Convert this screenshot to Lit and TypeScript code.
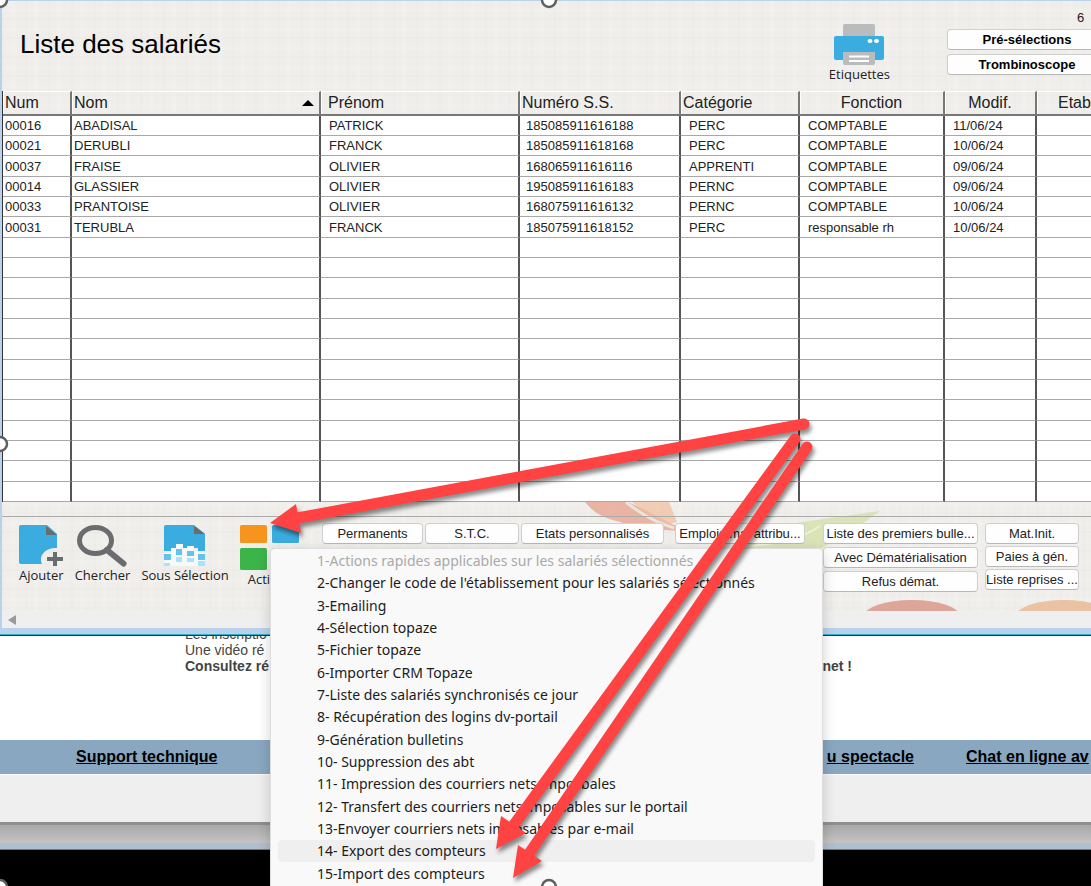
import { LitElement, html, css, svg } from "lit";
import { customElement } from "lit/decorators.js";
import { classMap } from "lit/directives/class-map.js";

interface Employee {
  num: string;
  nom: string;
  prenom: string;
  nss: string;
  categorie: string;
  fonction: string;
  modif: string;
}

const EMPLOYEES: Employee[] = [
  { num: "00016", nom: "ABADISAL", prenom: "PATRICK", nss: "185085911616188", categorie: "PERC", fonction: "COMPTABLE", modif: "11/06/24" },
  { num: "00021", nom: "DERUBLI", prenom: "FRANCK", nss: "185085911618168", categorie: "PERC", fonction: "COMPTABLE", modif: "10/06/24" },
  { num: "00037", nom: "FRAISE", prenom: "OLIVIER", nss: "168065911616116", categorie: "APPRENTI", fonction: "COMPTABLE", modif: "09/06/24" },
  { num: "00014", nom: "GLASSIER", prenom: "OLIVIER", nss: "195085911616183", categorie: "PERNC", fonction: "COMPTABLE", modif: "09/06/24" },
  { num: "00033", nom: "PRANTOISE", prenom: "OLIVIER", nss: "168075911616132", categorie: "PERNC", fonction: "COMPTABLE", modif: "10/06/24" },
  { num: "00031", nom: "TERUBLA", prenom: "FRANCK", nss: "185075911618152", categorie: "PERC", fonction: "responsable rh", modif: "10/06/24" },
];

const VISIBLE_ROWS = 19;

const MENU = [
  "1-Actions rapides applicables sur les salariés sélectionnés",
  "2-Changer le code de l'établissement pour les salariés sélectionnés",
  "3-Emailing",
  "4-Sélection topaze",
  "5-Fichier topaze",
  "6-Importer CRM Topaze",
  "7-Liste des salariés synchronisés ce jour",
  "8- Récupération des logins dv-portail",
  "9-Génération bulletins",
  "10- Suppression des abt",
  "11- Impression des courriers nets imposbales",
  "12- Transfert des courriers nets imposables sur le portail",
  "13-Envoyer courriers nets imposables par e-mail",
  "14- Export des compteurs",
  "15-Import des compteurs",
];

const printerIcon = html`<svg width="50" height="42" viewBox="0 0 50 42" aria-hidden="true">
  <rect x="9" y="0" width="32" height="16" rx="2" fill="#b9bbbd" />
  <rect x="0" y="12" width="50" height="24" rx="2" fill="#3aacdf" />
  <ellipse cx="36" cy="17" rx="2.5" ry="2" fill="#fff" />
  <ellipse cx="42.5" cy="17" rx="2.5" ry="2" fill="#fff" />
  <path d="M9 28h32v11a2 2 0 0 1-2 2H11a2 2 0 0 1-2-2z" fill="#b9bbbd" />
  <path d="M15 32.5h20M15 37h20" stroke="#fff" stroke-width="2" />
</svg>`;

const addIcon = html`<svg width="44" height="42" viewBox="0 0 44 42" aria-hidden="true">
  <path d="M2 0h26l10 9v14c-9-1-16 5-16 11 0 2 0 3 1 5H2a2 2 0 0 1-2-2V2a2 2 0 0 1 2-2z" fill="#3aacdf" />
  <path d="M27 1l11 9H27z" fill="#6a6c6e" />
  <path d="M36 27v14M28 34h16" stroke="#6a6c6e" stroke-width="4" />
</svg>`;

const searchIcon = html`<svg width="50" height="42" viewBox="0 0 50 42" aria-hidden="true">
  <ellipse cx="18.5" cy="15.5" rx="16" ry="13" fill="none" stroke="#6a6c6e" stroke-width="5" />
  <path d="M30 25L46.5 38.5" stroke="#6a6c6e" stroke-width="6" stroke-linecap="round" />
</svg>`;

const subsetIcon = html`<svg width="42" height="42" viewBox="0 0 42 42" aria-hidden="true">
  <path d="M2 0h28l11 9v17h-7v-3h-4v-2h-7v2h-4v-4h-7v4H7v3H0V2a2 2 0 0 1 2-2z" fill="#3aacdf" />
  <path d="M30 1l11 8H30z" fill="#6a6c6e" />
  <path d="M0 28h7v-5h5v-4h7v4h4v-2h7v5h4v2h7v13H0z" fill="#f7fafb" />
  <path d="M12 24h6v6h-6zM23 26h7v5h-7zM0 29h7v6H0zM34 29h7v6h-7z" fill="#62c3ec" />
  <path d="M12 32h6v5h-6zM23 33h7v4h-7zM0 38h6v3H0zM34 36h7v5h-7z" fill="#aae2fa" />
</svg>`;

const actionsIcon = html`<svg width="60" height="46" viewBox="0 0 60 46" aria-hidden="true">
  <rect x="0" y="0" width="27" height="18" rx="1.5" fill="#f7941e" />
  <rect x="32" y="0" width="27" height="18" rx="1.5" fill="#3aacdf" />
  <rect x="0" y="23" width="27" height="22" rx="1.5" fill="#3bb44a" />
  <rect x="32" y="23" width="27" height="22" rx="1.5" fill="#8a8c8e" />
</svg>`;

@customElement("push-button")
export class PushButton extends LitElement {
  static properties = { label: {}, bold: { type: Boolean } };
  declare label: string;
  declare bold: boolean;

  static styles = css`
    :host { display: block; min-width: 0; }
    button {
      display: block;
      box-sizing: border-box;
      width: 100%;
      height: 21px;
      padding: 0;
      border: 1px solid #cfcfcf;
      border-bottom-color: #b8b8b8;
      border-radius: 4px;
      background: #fefefe;
      color: #222;
      font: 13px/18px "Liberation Sans", Arial, sans-serif;
      text-align: center;
      white-space: nowrap;
      overflow: hidden;
    }
    .bold { font-weight: 700; color: #000; }
  `;

  render() {
    return html`<button type="button" class=${classMap({ bold: !!this.bold })}>${this.label}</button>`;
  }
}

@customElement("app-root")
export class AppRoot extends LitElement {
  static styles = css`
    :host {
      display: block;
      position: relative;
      height: 100vh;
      overflow: hidden;
      background: #000;
      color: #222;
      font: 13px/16px "Liberation Sans", Arial, sans-serif;
    }
    .window {
      border-left: 2px solid #b9d1ea;
      border-top: 1px solid #b9d1ea;
      background-color: #efeeea;
      background-image:
        repeating-linear-gradient(90deg, rgba(120, 120, 100, 0.02) 0 2px, transparent 2px 9px, rgba(255, 255, 255, 0.12) 9px 13px, transparent 13px 23px),
        repeating-linear-gradient(0deg, rgba(120, 120, 100, 0.02) 0 2px, transparent 2px 8px, rgba(255, 255, 255, 0.1) 8px 11px, transparent 11px 19px);
    }
    .head {
      display: grid;
      grid-template-columns: 1fr auto 144px;
      align-items: start;
      height: 90px;
    }
    h1 {
      margin: 0;
      padding: 28px 0 0 18px;
      font-size: 26px;
      line-height: 30px;
      font-weight: 400;
      color: #000;
    }
    .tool {
      display: flex;
      flex-direction: column;
      align-items: center;
      padding: 0;
      border: 0;
      background: none;
      color: #222;
      font: 13px/16px "Open Sans", "Noto Sans", sans-serif;
      white-space: nowrap;
    }
    .print { margin: 23px 57px 0 0; }
    .presel { display: grid; gap: 4px; width: 160px; }
    .count { padding: 9px 0 0 130px; font-size: 13px; line-height: 15px; }

    table {
      width: 100%;
      table-layout: fixed;
      border-collapse: separate;
      border-spacing: 0;
      border-left: 1px solid #333;
    }
    .c-num { width: 69px; }
    .c-nom { width: 249px; }
    .c-pre { width: 199px; }
    .c-nss { width: 161px; }
    .c-cat { width: 119px; }
    .c-fon { width: 145px; }
    .c-mod { width: 92px; }
    th {
      box-sizing: border-box;
      height: 25px;
      padding: 0 2px;
      border-top: 1px solid #fff;
      border-right: 2px solid #777;
      border-bottom: 2px solid #777;
      box-shadow: inset 1px 0 #fff;
      font-size: 16px;
      line-height: 20px;
      font-weight: 400;
      text-align: left;
      white-space: nowrap;
    }
    th.mid { text-align: center; }
    th.pre { padding-left: 7px; }
    th.etab { padding-left: 21px; border-right: 0; }
    .sort { display: flex; justify-content: space-between; align-items: center; padding-right: 3px; }
    td {
      box-sizing: border-box;
      height: 20px;
      padding: 1px 0 0 8px;
      border-right: 2px solid #555;
      border-bottom: 1px solid #a8a8a8;
      background: #fff;
      line-height: 18px;
      white-space: nowrap;
    }
    tr:nth-child(3n) td { height: 21px; }
    td:nth-child(-n + 2) { padding-left: 2px; }
    td:nth-child(4) { padding-left: 6px; }
    td:last-child { border-right: 0; }

    .toolbar { display: grid; height: 109px; overflow: hidden; }
    .deco, .controls { grid-area: 1 / 1; }
    .deco { min-width: 0; overflow: hidden; }
    .controls {
      display: flex;
      align-items: flex-start;
      margin-top: 14px;
      padding: 6px 0 0 17px;
      border-top: 1px solid #aaa;
    }
    .icons { display: flex; justify-content: space-between; width: 281px; margin: 2px 22px 0 0; }
    .wide-row { display: grid; grid-template-columns: 101px 94px 143px; gap: 2px; margin-right: 11px; }
    .emplois { width: 130px; margin-right: 18px; }
    .stack { display: grid; gap: 3px; width: 155px; margin-right: 7px; }
    .stack.narrow { width: 94px; gap: 2px; }
    .scroll {
      display: flex;
      align-items: center;
      height: 17px;
      padding-left: 6px;
      background: #efefef;
    }
    .window-edge {
      height: 8px;
      box-sizing: border-box;
      background: #b9d1ea;
      border-bottom: 1px solid #1d3038;
      box-shadow: inset 0 -1px #25b6cf;
    }

    .news {
      height: 104px;
      box-sizing: border-box;
      overflow: hidden;
      padding-left: 185px;
      background: #fff;
      color: #444;
      font-size: 14px;
    }
    .news p { margin: 0; white-space: nowrap; }
    .news p:first-child { margin-top: -10px; }
    .news .strong { display: flex; justify-content: space-between; width: 667px; font-weight: 700; }
    .links {
      display: grid;
      grid-template-columns: 1fr auto 125px;
      column-gap: 52px;
      align-items: center;
      height: 34px;
      padding-left: 76px;
      background: #89a7c0;
      overflow: hidden;
    }
    .links a { color: #000; font-size: 16px; line-height: 18px; font-weight: 700; white-space: nowrap; }
    .status { height: 51px; background: #efefef; border-bottom: 3px solid #8f8f8f; box-sizing: border-box; border-top: 1px solid #fafafa; }
    .shade { height: 18px; background: linear-gradient(#a8a8a8, #c4c4c4); }
    .rim { height: 7px; background: #b0bfce; border-bottom: 1px solid #777; box-sizing: border-box; }

    .menu {
      position: absolute;
      top: 548px;
      left: 270px;
      width: 553px;
      box-sizing: border-box;
      margin: 0;
      padding: 1px 7px 12px;
      list-style: none;
      border: 1px solid #dedede;
      border-radius: 4px;
      background: #f9f9f9;
      box-shadow: 0 4px 14px rgba(0, 0, 0, 0.18);
    }
    .item {
      display: block;
      width: 100%;
      height: 22px;
      padding: 0 0 0 39px;
      border: 0;
      border-radius: 4px;
      background: none;
      color: #1c1c1c;
      font: 14px/22px "Noto Sans", "Open Sans", sans-serif;
      text-align: left;
      white-space: nowrap;
    }
    li:nth-child(3n) .item { height: 23px; }
    .item:disabled { color: #a9a9a9; }
    .item.hot { background: #efefef; }
    .notes { position: absolute; top: 0; left: 0; pointer-events: none; }
    .arrow { filter: drop-shadow(2px 4px 2px rgba(0, 0, 0, 0.45)); }
  `;

  private row(e?: Employee) {
    return html`<tr>
      <td>${e?.num}</td><td>${e?.nom}</td><td>${e?.prenom}</td><td>${e?.nss}</td>
      <td>${e?.categorie}</td><td>${e?.fonction}</td><td>${e?.modif}</td><td></td>
    </tr>`;
  }

  private arrow(shaft: string, head: string) {
    return svg`<g class="arrow">
      <path d=${shaft} stroke="#ff4343" stroke-width="11" stroke-linecap="round" fill="none" />
      <path d=${head} fill="#ff4343" />
    </g>`;
  }

  private handle(cx: number, cy: number) {
    return svg`<circle cx=${cx} cy=${cy} r="7" fill="#fff" stroke="#5f5f5f" stroke-width="2.5" />`;
  }

  render() {
    return html`
      <main class="window">
        <header class="head">
          <h1>Liste des salariés</h1>
          <button type="button" class="tool print">${printerIcon}<span>Etiquettes</span></button>
          <div class="presel">
            <span class="count">6</span>
            <push-button bold label="Pré-sélections"></push-button>
            <push-button bold label="Trombinoscope"></push-button>
          </div>
        </header>
        <table>
          <colgroup>
            <col class="c-num" /><col class="c-nom" /><col class="c-pre" /><col class="c-nss" />
            <col class="c-cat" /><col class="c-fon" /><col class="c-mod" /><col />
          </colgroup>
          <thead>
            <tr>
              <th>Num</th>
              <th><span class="sort">Nom <svg width="12" height="6" aria-hidden="true"><path d="M0 6L6 0l6 6z" /></svg></span></th>
              <th class="pre">Prénom</th>
              <th>Numéro S.S.</th>
              <th>Catégorie</th>
              <th class="mid">Fonction</th>
              <th class="mid">Modif.</th>
              <th class="etab">Etab</th>
            </tr>
          </thead>
          <tbody>
            ${Array.from({ length: VISIBLE_ROWS }, (_, i) => this.row(EMPLOYEES[i]))}
          </tbody>
        </table>
        <div class="toolbar">
          <svg class="deco" width="1089" height="109" aria-hidden="true">
            <path d="M583 0h43q22 10 44 22l18 8-24-2q-34 4-45-8-24-4-36-20z" fill="#e9a594" opacity=".8" />
            <path d="M630 0h37l8 20-8 2q-20-6-37-22z" fill="#f2bd9c" opacity=".7" />
            <path d="M624 0q22 18 48 26" stroke="#e8e6dc" stroke-width="3" fill="none" />
            <path d="M738 56q20-32 62-36l78-11q-22 16-32 22l-44 25z" fill="#d3dfa6" opacity=".75" />
            <path d="M742 44q50-2 76-20" stroke="#eef0dc" stroke-width="2" fill="none" />
            <ellipse cx="910" cy="114" rx="48" ry="16" fill="#d99286" opacity=".8" />
            <ellipse cx="1062" cy="114" rx="48" ry="16" fill="#e8b792" opacity=".8" />
          </svg>
          <div class="controls">
            <div class="icons">
              <button type="button" class="tool">${addIcon}<span>Ajouter</span></button>
              <button type="button" class="tool">${searchIcon}<span>Chercher</span></button>
              <button type="button" class="tool">${subsetIcon}<span>Sous Sélection</span></button>
              <button type="button" class="tool">${actionsIcon}<span>Actions</span></button>
            </div>
            <div class="wide-row">
              <push-button label="Permanents"></push-button>
              <push-button label="S.T.C."></push-button>
              <push-button label="Etats personnalisés"></push-button>
            </div>
            <push-button class="emplois" label="Emplois mal attribu..."></push-button>
            <div class="stack">
              <push-button label="Liste des premiers bulle..."></push-button>
              <push-button label="Avec Dématérialisation"></push-button>
              <push-button label="Refus démat."></push-button>
            </div>
            <div class="stack narrow">
              <push-button label="Mat.Init."></push-button>
              <push-button label="Paies à gén."></push-button>
              <push-button label="Liste reprises ..."></push-button>
            </div>
          </div>
        </div>
        <div class="scroll">
          <svg width="8" height="10" aria-hidden="true"><path d="M8 0v10L0 5z" fill="#999" /></svg>
        </div>
      </main>
      <div class="window-edge"></div>
      <section class="news">
        <p>Les inscriptio</p>
        <p>Une vidéo ré</p>
        <p class="strong"><span>Consultez ré</span><span>net !</span></p>
      </section>
      <nav class="links">
        <a href="#support">Support technique</a>
        <a href="#spectacle">u spectacle</a>
        <a href="#chat">Chat en ligne av</a>
      </nav>
      <div class="status"></div>
      <div class="shade"></div>
      <div class="rim"></div>

      <ul class="menu">
        ${MENU.map(
          (label, i) => html`<li>
            <button type="button" class=${classMap({ item: true, hot: i === 13 })} ?disabled=${i === 0}>${label}</button>
          </li>`
        )}
      </ul>

      <svg class="notes" width="1091" height="886" aria-hidden="true">
        ${this.arrow("M804 424L292 519", "M270 523L296 504L301 533Z")}
        ${this.arrow("M795 439L510 830", "M496 849L501 816L526 833Z")}
        ${this.arrow("M807 447L526 858", "M513 878L518 845L542 861Z")}
        ${this.handle(0, 0)}${this.handle(549, 0)}${this.handle(0, 444)}
        ${this.handle(0, 887)}${this.handle(549, 887)}
      </svg>
    `;
  }
}
